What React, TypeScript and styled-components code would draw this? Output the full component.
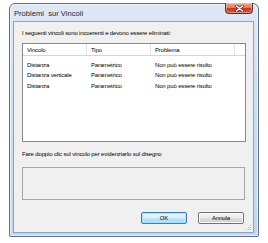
import React from "react";
import styled, { createGlobalStyle } from "styled-components";

const Global = createGlobalStyle`
  html, body { margin: 0; padding: 0; background: #ffffff; }
  body { font-family: "Liberation Sans", Arial, sans-serif; }
  * { box-sizing: border-box; }
`;

const Page = styled.div`
  width: 268px;
  height: 243px;
  padding: 3px 0 0 9px;
`;

const Window = styled.div`
  width: 250px;
  height: 234px;
  border: 1px solid #5d6f86;
  border-radius: 6px 6px 2px 2px;
  background: linear-gradient(to bottom, #dde8f5 0%, #cfdff1 40%, #c3d6ed 100%);
  padding: 0 4px 3px 3px;
  display: flex;
  flex-direction: column;
  box-shadow: inset 0 0 0 1px rgba(255, 255, 255, 0.6);
`;

const TitleBar = styled.div`
  height: 17px;
  display: flex;
  align-items: flex-start;
  justify-content: space-between;
`;

const Title = styled.div`
  font-size: 7.6px;
  color: #1b2a3c;
  padding: 5px 0 0 1px;
  white-space: pre;
`;

const CloseBtn = styled.div`
  width: 28px;
  height: 11px;
  margin: -1px 1px 0 0;
  border: 1px solid #6e2a22;
  border-top: none;
  border-radius: 0 0 4px 4px;
  background: linear-gradient(to bottom, #e9a99b 0%, #dc7d6a 45%, #c63a24 55%, #d0553f 100%);
  display: flex;
  align-items: center;
  justify-content: center;
  box-shadow: inset 0 0 0 1px rgba(255, 220, 210, 0.45);
`;

const Client = styled.div`
  flex: 1;
  position: relative;
  background: #f0f0f0;
  border: 1px solid #8fa3bd;
  padding: 7px 7px 0 8px;
  display: flex;
  flex-direction: column;
  font-size: 6px;
  letter-spacing: -0.15px;
  color: #000;
`;

const Label = styled.div`
  height: 8px;
  line-height: 8px;
  white-space: nowrap;
`;

const ListBox = styled.div`
  margin-top: 6px;
  height: 99px;
  border: 1px solid #828790;
  background: #ffffff;
  display: flex;
  flex-direction: column;
`;

const Grid = styled.div<{ $header?: boolean }>`
  display: grid;
  grid-template-columns: 64px 64px 84px 1fr;
  height: ${(p) => (p.$header ? "12px" : "10.5px")};
  border-bottom: ${(p) => (p.$header ? "1px solid #d5d5d5" : "none")};
  margin-bottom: ${(p) => (p.$header ? "3.5px" : "0")};
`;

const Cell = styled.div<{ $header?: boolean }>`
  display: flex;
  align-items: center;
  padding-left: ${(p) => (p.$header ? "4px" : "4px")};
  white-space: nowrap;
  border-right: ${(p) => (p.$header ? "1px solid #e3e3e3" : "none")};
  color: #000;
`;

const Hint = styled(Label)`
  margin-top: 8px;
`;

const InfoBox = styled.div`
  margin-top: 9px;
  height: 33px;
  margin-right: 1px;
  border: 1px solid #a6a6a6;
  background: #f0f0f0;
`;

const Buttons = styled.div`
  margin-top: 12px;
  display: flex;
  justify-content: flex-end;
  gap: 11px;
  padding-right: 2px;
`;

const Button = styled.div<{ $default?: boolean }>`
  width: 46px;
  height: 12px;
  border: 1px solid ${(p) => (p.$default ? "#3c7fb1" : "#707070")};
  border-radius: 2px;
  background: ${(p) =>
    p.$default
      ? "linear-gradient(to bottom, #eaf6fd 0%, #d9f0fc 50%, #bee6fd 50%, #a7d9f5 100%)"
      : "linear-gradient(to bottom, #f2f2f2 0%, #ebebeb 50%, #dddddd 50%, #cfcfcf 100%)"};
  box-shadow: inset 0 0 0 1px ${(p) => (p.$default ? "#a8e4f8" : "#fcfcfc")};
  display: flex;
  align-items: center;
  justify-content: center;
  font-size: 6px;
  color: #000;
`;

const Grip = styled.svg`
  position: absolute;
  right: 1px;
  bottom: 1px;
`;

const rows = [
  ["Distanza", "Parametrico", "Non può essere risolto"],
  ["Distanza verticale", "Parametrico", "Non può essere risolto"],
  ["Distanza", "Parametrico", "Non può essere risolto"],
];

export default function App() {
  return (
    <>
      <Global />
      <Page>
        <Window>
          <TitleBar>
            <Title>Problemi  sur Vincoli</Title>
            <CloseBtn>
              <svg width="9" height="7" viewBox="0 0 9 7">
                <path d="M1.5 1 L7.5 6 M7.5 1 L1.5 6" stroke="#4a2a2a" strokeWidth="2.6" strokeLinecap="round" />
                <path d="M1.5 1 L7.5 6 M7.5 1 L1.5 6" stroke="#ffffff" strokeWidth="1.4" strokeLinecap="round" />
              </svg>
            </CloseBtn>
          </TitleBar>
          <Client>
            <Label>I seguenti vincoli sono incoerenti e devono essere eliminati:</Label>
            <ListBox>
              <Grid $header>
                <Cell $header>Vincolo</Cell>
                <Cell $header>Tipo</Cell>
                <Cell $header>Problema</Cell>
                <Cell />
              </Grid>
              {rows.map((r, i) => (
                <Grid key={i}>
                  <Cell>{r[0]}</Cell>
                  <Cell>{r[1]}</Cell>
                  <Cell>{r[2]}</Cell>
                  <Cell />
                </Grid>
              ))}
            </ListBox>
            <Hint>Fare doppio clic sul vincolo per evidenziarlo sul disegno</Hint>
            <InfoBox />
            <Buttons>
              <Button $default>OK</Button>
              <Button>Annula</Button>
            </Buttons>
            <Grip width="6" height="6" viewBox="0 0 6 6">
              <rect x="4" y="0" width="1" height="1" fill="#b8b8b8" />
              <rect x="2" y="2" width="1" height="1" fill="#b8b8b8" />
              <rect x="4" y="2" width="1" height="1" fill="#b8b8b8" />
              <rect x="0" y="4" width="1" height="1" fill="#b8b8b8" />
              <rect x="2" y="4" width="1" height="1" fill="#b8b8b8" />
              <rect x="4" y="4" width="1" height="1" fill="#b8b8b8" />
            </Grip>
          </Client>
        </Window>
      </Page>
    </>
  );
}
